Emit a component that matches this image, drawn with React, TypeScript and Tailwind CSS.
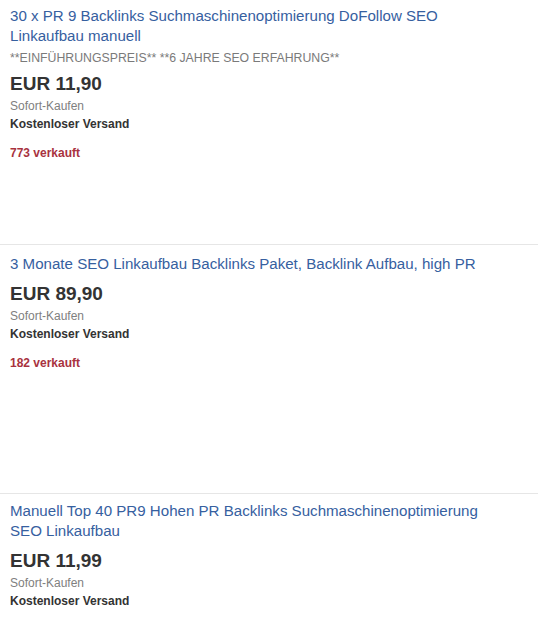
import React from "react";

type Listing = {
  title: string;
  subtitle?: string;
  price: string;
  sold?: string;
};

const listings: Listing[] = [
  {
    title: "30 x PR 9 Backlinks Suchmaschinenoptimierung DoFollow SEO Linkaufbau manuell",
    subtitle: "**EINFÜHRUNGSPREIS** **6 JAHRE SEO ERFAHRUNG**",
    price: "EUR 11,90",
    sold: "773 verkauft",
  },
  {
    title: "3 Monate SEO Linkaufbau Backlinks Paket, Backlink Aufbau, high PR",
    price: "EUR 89,90",
    sold: "182 verkauft",
  },
  {
    title: "Manuell Top 40 PR9 Hohen PR Backlinks Suchmaschinenoptimierung SEO Linkaufbau",
    price: "EUR 11,99",
  },
];

function ListingRow({ item, first, last }: { item: Listing; first: boolean; last: boolean }) {
  return (
    <li
      className={`flex flex-col px-[10px] ${first ? "pt-[6px] h-[245px]" : last ? "pt-[7px]" : "pt-[9px] h-[249px]"} ${
        last ? "" : "border-b border-[#e6e6e6]"
      }`}
    >
      <a className="text-[15.1px] leading-[20px] text-[#36609f] pr-[30px]">{item.title}</a>
      {item.subtitle && (
        <div className="text-[12.3px] leading-[18px] text-[#7a7a7a] mt-[3px]">{item.subtitle}</div>
      )}
      <div className={`text-[19px] leading-[24px] font-bold text-[#333] ${item.subtitle ? "mt-[5px]" : "mt-[8px]"}`}>
        {item.price}
      </div>
      <div className="text-[12px] leading-[16px] text-[#808080] mt-[2px]">Sofort-Kaufen</div>
      <div className="text-[12px] leading-[16px] font-bold text-[#333] mt-[2px]">Kostenloser Versand</div>
      {item.sold && (
        <div className="text-[12px] leading-[16px] font-bold text-[#a8323e] mt-[13px]">{item.sold}</div>
      )}
    </li>
  );
}

export default function App() {
  return (
    <div className="w-[553px] h-[621px] bg-white overflow-hidden" style={{ fontFamily: '"Liberation Sans", Arial, sans-serif' }}>
      <ul className="w-[538px]">
        {listings.map((item, i) => (
          <ListingRow key={i} item={item} first={i === 0} last={i === listings.length - 1} />
        ))}
      </ul>
    </div>
  );
}
